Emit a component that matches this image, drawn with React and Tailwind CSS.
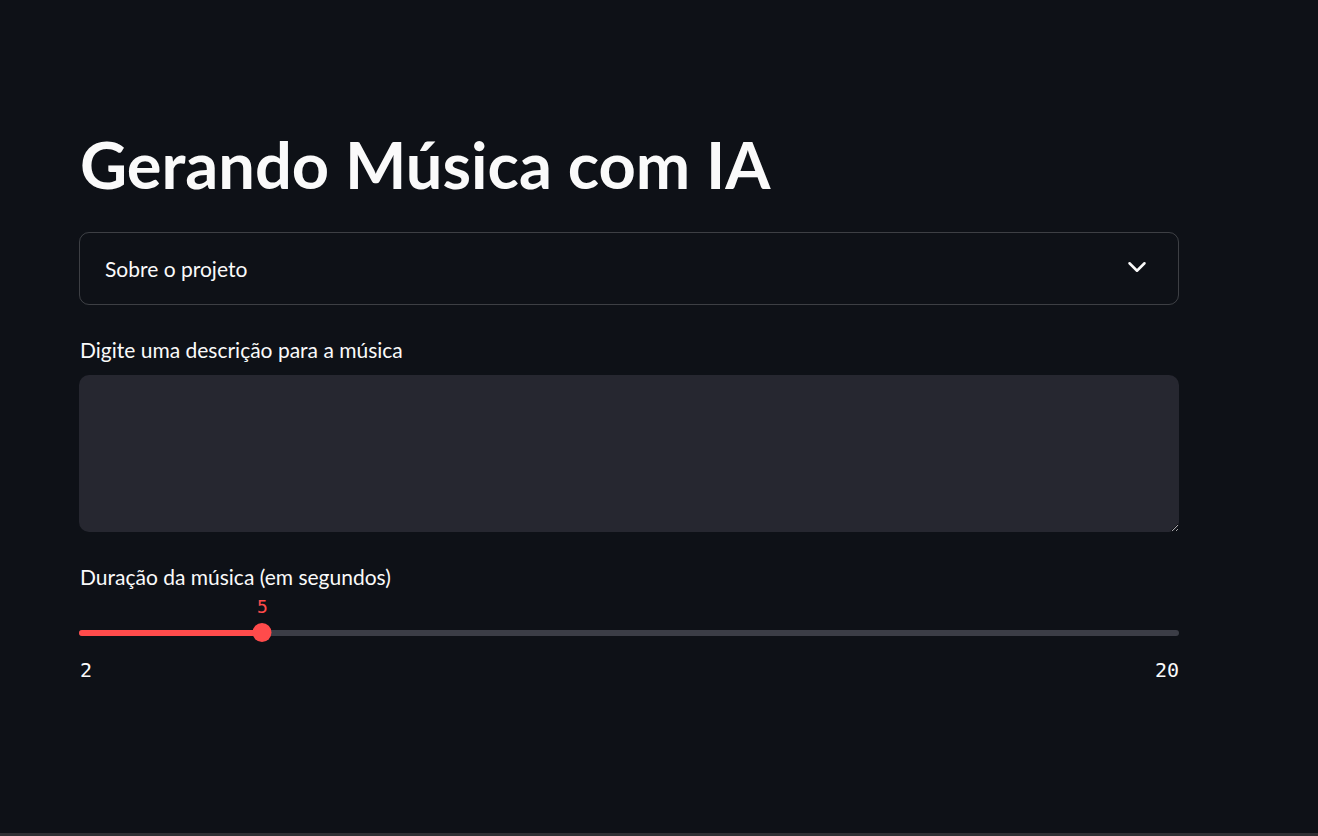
import { ChevronDown } from 'lucide-react';

export default function App() {
  const min = 2;
  const max = 20;
  const value = 5;
  const pct = ((value - min) / (max - min)) * 100;

  return (
    <div className="min-h-screen h-[836px] bg-[#0e1117] text-[#fafafa] font-['Lato','Noto_Sans',sans-serif] border-b-[3px] border-[#2f2f33] overflow-hidden">
      <div className="pl-[79px] pt-[126px]">
        <div className="w-[1100px]">
          {/* Title */}
          <h1 className="text-[65px] font-bold leading-[76px] pl-[1px]">
            Gerando Música com IA
          </h1>

          {/* Expander */}
          <div className="mt-[30px] h-[73px] border border-[#fafafa]/20 rounded-[10px] flex items-center justify-between pl-[25px] pr-[26px]">
            <span className="text-[21px]">Sobre o projeto</span>
            <ChevronDown className="w-[30px] h-[30px] text-[#fafafa] -mt-[3px]" strokeWidth={2} />
          </div>

          {/* Text area */}
          <label className="block mt-[32px] text-[21px] leading-[26px] pl-[1px]">
            Digite uma descrição para a música
          </label>
          <textarea
            className="block mt-[12px] w-full h-[157px] bg-[#262730] rounded-[10px] outline-none resize-y"
          />

          {/* Slider */}
          <label className="block mt-[32px] text-[21px] leading-[26px] pl-[1px]">
            Duração da música (em segundos)
          </label>
          <div className="relative mt-[2px] h-[67px]">
            <div
              className="absolute top-[4px] -translate-x-1/2 text-[#ff4b4b] text-[18px] leading-[22px] font-['DejaVu_Sans_Mono',monospace]"
              style={{ left: `${pct}%` }}
            >
              {value}
            </div>
            <div className="absolute left-0 right-0 top-[38px] h-[6px] rounded-full bg-[#3b3d46]">
              <div className="h-full rounded-full bg-[#ff4b4b]" style={{ width: `${pct}%` }} />
            </div>
            <div
              className="absolute top-[31px] w-[19px] h-[19px] -translate-x-1/2 rounded-full bg-[#ff4b4b]"
              style={{ left: `${pct}%` }}
            />
          </div>
          <div className="flex justify-between text-[20px] leading-[22px] font-['DejaVu_Sans_Mono',monospace] pl-[1px]">
            <span>{min}</span>
            <span>{max}</span>
          </div>
        </div>
      </div>
    </div>
  );
}
